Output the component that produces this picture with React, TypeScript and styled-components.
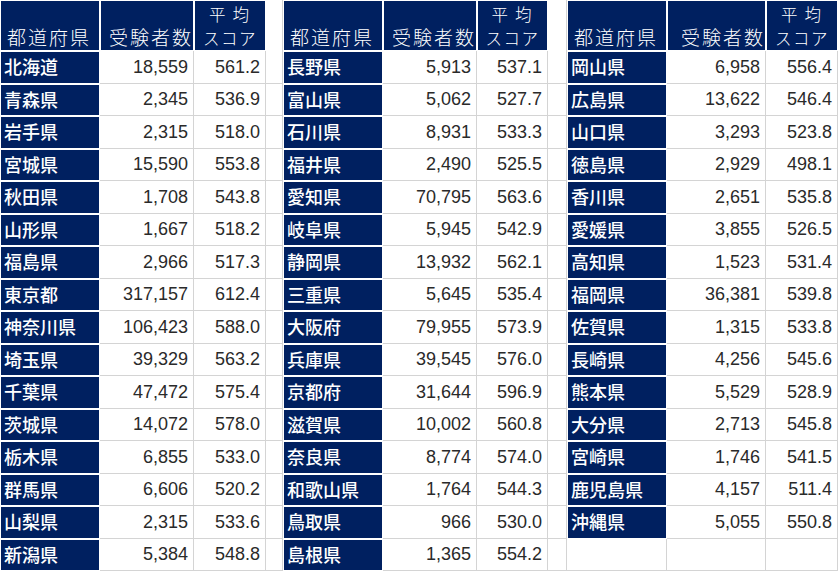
import React from 'react'
import styled, { createGlobalStyle } from 'styled-components'

const NAVY = '#002060'
const GRID = '#d4d4d4'

type Row = [string, string, string]

const groups: Row[][] = [
    [
        ['北海道', '18,559', '561.2'],
        ['青森県', '2,345', '536.9'],
        ['岩手県', '2,315', '518.0'],
        ['宮城県', '15,590', '553.8'],
        ['秋田県', '1,708', '543.8'],
        ['山形県', '1,667', '518.2'],
        ['福島県', '2,966', '517.3'],
        ['東京都', '317,157', '612.4'],
        ['神奈川県', '106,423', '588.0'],
        ['埼玉県', '39,329', '563.2'],
        ['千葉県', '47,472', '575.4'],
        ['茨城県', '14,072', '578.0'],
        ['栃木県', '6,855', '533.0'],
        ['群馬県', '6,606', '520.2'],
        ['山梨県', '2,315', '533.6'],
        ['新潟県', '5,384', '548.8']
    ],
    [
        ['長野県', '5,913', '537.1'],
        ['富山県', '5,062', '527.7'],
        ['石川県', '8,931', '533.3'],
        ['福井県', '2,490', '525.5'],
        ['愛知県', '70,795', '563.6'],
        ['岐阜県', '5,945', '542.9'],
        ['静岡県', '13,932', '562.1'],
        ['三重県', '5,645', '535.4'],
        ['大阪府', '79,955', '573.9'],
        ['兵庫県', '39,545', '576.0'],
        ['京都府', '31,644', '596.9'],
        ['滋賀県', '10,002', '560.8'],
        ['奈良県', '8,774', '574.0'],
        ['和歌山県', '1,764', '544.3'],
        ['鳥取県', '966', '530.0'],
        ['島根県', '1,365', '554.2']
    ],
    [
        ['岡山県', '6,958', '556.4'],
        ['広島県', '13,622', '546.4'],
        ['山口県', '3,293', '523.8'],
        ['徳島県', '2,929', '498.1'],
        ['香川県', '2,651', '535.8'],
        ['愛媛県', '3,855', '526.5'],
        ['高知県', '1,523', '531.4'],
        ['福岡県', '36,381', '539.8'],
        ['佐賀県', '1,315', '533.8'],
        ['長崎県', '4,256', '545.6'],
        ['熊本県', '5,529', '528.9'],
        ['大分県', '2,713', '545.8'],
        ['宮崎県', '1,746', '541.5'],
        ['鹿児島県', '4,157', '511.4'],
        ['沖縄県', '5,055', '550.8']
    ]
]

const ROWS = 16

const GlobalStyle = createGlobalStyle`
    html, body {
        margin: 0;
        padding: 0;
        background: #ffffff;
    }
    body {
        font-family: "Noto Sans CJK JP", "Liberation Sans", sans-serif;
    }
`

const Sheet = styled.div`
    display: grid;
    grid-template-columns: 100px 94px 72px 17px 100px 94px 71px 19px 100px 99px 72px;
    grid-template-rows: 51px repeat(${ROWS}, 32.5px);
    width: 840px;
`

const HeaderCell = styled.div<{ $align: 'left' | 'right' | 'center' }>`
    display: flex;
    flex-direction: column;
    justify-content: flex-end;
    align-items: ${({ $align }) =>
        $align === 'left' ? 'flex-start' : $align === 'right' ? 'flex-end' : 'center'};
    background: ${NAVY};
    border: 1px solid #ffffff;
    padding: 0 0 ${({ $align }) => ($align === 'center' ? '0' : '1px')}
        ${({ $align }) => ($align === 'left' ? '6px' : '0')};
    color: #ffffff;
    font-family: "Noto Sans CJK JP", sans-serif;
    font-size: ${({ $align }) => ($align === 'center' ? '16.5px' : '19px')};
    font-weight: 300;
    letter-spacing: ${({ $align }) => ($align === 'center' ? '1.5px' : '2px')};
    line-height: 24px;
    overflow: hidden;
    white-space: nowrap;
`

const WideLine = styled.span`
    letter-spacing: 7px;
    margin-right: -5px;
`

const NameCell = styled.div`
    display: flex;
    align-items: center;
    background: ${NAVY};
    border: 1px solid #ffffff;
    padding: 0 0 2px 3px;
    color: #ffffff;
    font-family: "Noto Sans CJK JP", sans-serif;
    font-size: 18px;
    font-weight: 500;
    white-space: nowrap;
    overflow: hidden;
`

const NumCell = styled.div`
    display: flex;
    align-items: center;
    justify-content: flex-end;
    border-right: 1px solid ${GRID};
    border-bottom: 1px solid ${GRID};
    padding: 1px 5px 0 0;
    color: #2a2a2a;
    font-family: "Liberation Sans", sans-serif;
    font-size: 18px;
    white-space: nowrap;
`

const Spacer = styled.div`
    border-right: 1px solid ${GRID};
    border-bottom: 1px solid ${GRID};
`

const BlankHeader = styled.div`
    border-right: 1px solid ${GRID};
`

export default function App() {
    const cells: React.ReactNode[] = []

    groups.forEach((_, g) => {
        cells.push(
            <HeaderCell key={`h-name-${g}`} $align="left">
                都道府県
            </HeaderCell>,
            <HeaderCell key={`h-count-${g}`} $align="right">
                受験者数
            </HeaderCell>,
            <HeaderCell key={`h-score-${g}`} $align="center">
                <WideLine>平均</WideLine>
                <span>スコア</span>
            </HeaderCell>
        )
        if (g < groups.length - 1) cells.push(<BlankHeader key={`h-gap-${g}`} />)
    })

    for (let r = 0; r < ROWS; r++) {
        groups.forEach((rows, g) => {
            const row = rows[r]
            if (row) {
                cells.push(
                    <NameCell key={`n-${g}-${r}`}>{row[0]}</NameCell>,
                    <NumCell key={`c-${g}-${r}`}>{row[1]}</NumCell>,
                    <NumCell key={`s-${g}-${r}`}>{row[2]}</NumCell>
                )
            } else {
                cells.push(
                    <Spacer key={`n-${g}-${r}`} />,
                    <Spacer key={`c-${g}-${r}`} />,
                    <Spacer key={`s-${g}-${r}`} />
                )
            }
            if (g < groups.length - 1) cells.push(<Spacer key={`gap-${g}-${r}`} />)
        })
    }

    return (
        <>
            <GlobalStyle />
            <Sheet>{cells}</Sheet>
        </>
    )
}
